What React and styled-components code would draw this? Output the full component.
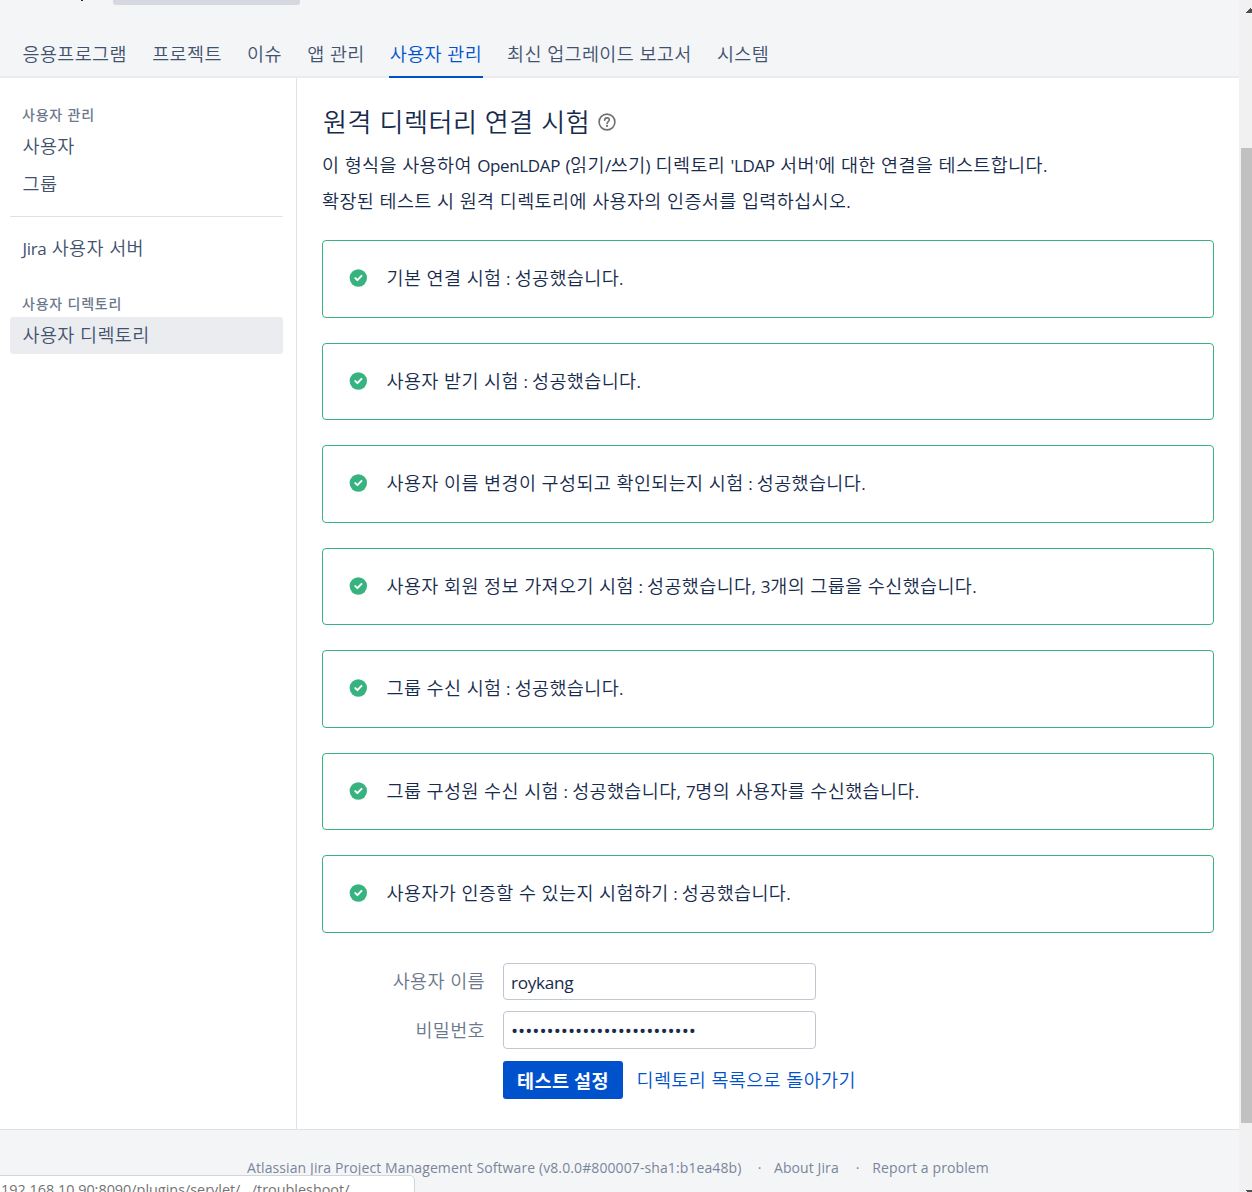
import React from "react";
import styled, { createGlobalStyle } from "styled-components";

const hangul = `"Noto Sans CJK KR", sans-serif`;
const latin = `"Open Sans", "Noto Sans CJK KR", sans-serif`;

const GlobalStyle = createGlobalStyle`
  * { box-sizing: border-box; }
  html, body { margin: 0; height: 100%; overflow: hidden; }
  body {
    background: #fff;
    color: #172b4d;
    font-family: ${hangul};
    font-size: 18.5px;
    font-weight: 350;
    letter-spacing: 0.38px;
    word-spacing: 0.8px;
  }
`;

const Window = styled.div`
  display: flex;
  height: 1192px;
  overflow: hidden;
`;

const Page = styled.div`
  width: 1239px;
  height: 1192px;
  display: flex;
  flex-direction: column;
`;

const Header = styled.header`
  height: 78px;
  background: #f4f5f7;
  box-shadow: inset 0 -2px 0 #ebecf0;
  display: flex;
  flex-direction: column;
  flex-shrink: 0;
`;

const TitleRow = styled.div`
  height: 31px;
  padding-left: 81px;
  display: flex;
  align-items: flex-start;
  gap: 30px;
`;

const TitleEdge = styled.span`
  width: 2px;
  height: 1px;
  background: #172b4d;
`;

const SearchEdge = styled.span`
  width: 187px;
  height: 5px;
  border-radius: 0 0 3px 3px;
  background: #d5d8e0;
`;

const Tabs = styled.nav`
  display: flex;
  gap: 25.3px;
  padding-left: 22.5px;
  height: 47px;
`;

const Tab = styled.a`
  height: 47px;
  line-height: 45px;
  white-space: nowrap;
  color: ${(p) => (p.$active ? "#0052cc" : "#42526e")};
  border-bottom: 2px solid ${(p) => (p.$active ? "#0052cc" : "transparent")};
  padding: 0 ${(p) => (p.$active ? "0.6px" : "0")};
  margin: 0 ${(p) => (p.$active ? "-0.9px" : "0")};
`;

const Body = styled.div`
  display: flex;
  height: 1051px;
  flex-shrink: 0;
`;

const Sidebar = styled.aside`
  width: 297px;
  border-right: 1px solid #dfe1e5;
  padding: 26px 13px 0 10px;
`;

const GroupTitle = styled.h3`
  margin: 0;
  padding-left: 12px;
  height: 24px;
  line-height: 21px;
  font-size: 14px;
  font-weight: 500;
  letter-spacing: 0.75px;
  color: #6b778c;
`;

const SideLink = styled.a`
  display: block;
  height: 37.5px;
  line-height: 34px;
  padding-left: 12.5px;
  border-radius: 3px;
  color: #42526e;
  background: ${(p) => (p.$selected ? "#ebecf0" : "transparent")};
`;

const Rule = styled.hr`
  border: 0;
  border-top: 1px solid #dfe1e5;
  margin: 13px 0;
`;

const Group = styled.section`
  margin-top: ${(p) => p.$top || 0}px;
`;

const Main = styled.main`
  flex: 1;
  padding: 24px 25px 0 25px;
`;

const Heading = styled.h1`
  margin: 0;
  padding-left: 1px;
  height: 40px;
  display: flex;
  align-items: center;
  gap: 8px;
  font-size: 26px;
  font-weight: 350;
  letter-spacing: 0.58px;
  word-spacing: 1px;
  line-height: 38px;
`;

const HeadingText = styled.span`
  height: 40px;
`;

const Intro = styled.p`
  margin: 0;
  height: 36px;
  line-height: 45px;
  white-space: nowrap;
`;

const Latin = styled.span`
  font-family: ${latin};
  font-size: 17px;
  font-weight: 400;
  letter-spacing: -0.35px;
  line-height: 1;
  margin: 0 ${(p) => (p.$tight ? "-0.8px" : "0")};
`;

const Results = styled.ul`
  list-style: none;
  margin: 0;
  padding: 26.25px 0 0;
  display: flex;
  flex-direction: column;
  gap: 25px;
`;

const Result = styled.li`
  height: 77.5px;
  border: 1px solid #36b37e;
  border-radius: 4px;
  padding: 0 0 4px 26px;
  display: flex;
  align-items: center;
  gap: 19.5px;
  svg {
    flex-shrink: 0;
    margin-top: 2px;
  }
`;

const Form = styled.form`
  margin-top: 30px;
  display: grid;
  grid-template-columns: 163px auto;
  column-gap: 18px;
  row-gap: 11px;
  justify-content: start;
`;

const Label = styled.label`
  line-height: ${(p) => p.$line}px;
  text-align: right;
  color: #6b778c;
`;

const Input = styled.input`
  width: 313px;
  height: ${(p) => p.$height}px;
  border: 1px solid #c1c7d0;
  border-radius: 4px;
  padding: 2px 7px 0;
  color: #172b4d;
  background: #fff;
  font-family: ${latin};
  font-size: ${(p) => p.$size}px;
  letter-spacing: ${(p) => p.$spacing}px;
  outline: none;
`;

const Actions = styled.div`
  grid-column: 2;
  display: flex;
  align-items: center;
  gap: 13.5px;
  margin-top: 1px;
`;

const Submit = styled.button`
  width: 120px;
  height: 38px;
  border: 0;
  border-radius: 3px;
  padding: 0;
  background: #0052cc;
  color: #fff;
  font-family: ${hangul};
  font-size: 18.5px;
  font-weight: 700;
  letter-spacing: 0.45px;
`;

const BackLink = styled.a`
  color: #0052cc;
  padding-bottom: 2px;
`;

const Footer = styled.footer`
  flex: 1;
  border-top: 1px solid #dfe1e5;
  background: #f4f5f7;
  padding: 27px 0 0 247px;
  display: flex;
  align-items: flex-start;
  white-space: nowrap;
  font-family: ${latin};
  font-size: 14px;
  font-weight: 400;
  line-height: 22px;
  letter-spacing: 0.1px;
  word-spacing: 0;
  color: #7a869a;
`;

const Dot = styled.span`
  width: ${(p) => p.$width}px;
  padding-left: 4px;
  text-align: center;
`;

const StatusBubble = styled.div`
  position: fixed;
  left: -1px;
  top: 1175px;
  width: 416px;
  height: 30px;
  border: 1px solid #d3d5d9;
  border-radius: 0 5px 0 0;
  background: #fff;
  padding-left: 1px;
  font-family: ${latin};
  font-size: 14.4px;
  line-height: 27px;
  font-weight: 400;
  letter-spacing: 0;
  word-spacing: 0;
  color: #737373;
  white-space: nowrap;
`;

const Scrollbar = styled.div`
  width: 13px;
  height: 1192px;
  background: #f1f1f1;
  padding: 8px 0 0 2px;
  display: flex;
  flex-direction: column;
`;

const Arrow = styled.svg`
  display: block;
  margin-left: 4px;
  flex-shrink: 0;
`;

const Thumb = styled.div`
  height: 975px;
  margin: 135px 0 67px;
  background: #c1c1c1;
  flex-shrink: 0;
`;

function CheckIcon() {
  return (
    <svg width="18" height="18" viewBox="0 0 18 18">
      <circle cx="9.3" cy="9" r="8.7" fill="#36b37e" />
      <path d="M6.3 9.1 8.4 11.1 12.5 6.9" fill="none" stroke="#fff" strokeWidth="2" strokeLinecap="round" strokeLinejoin="round" />
    </svg>
  );
}

function HelpIcon() {
  return (
    <svg width="18" height="18" viewBox="0 0 18 18" fill="none" stroke="#707070">
      <circle cx="9" cy="9" r="7.9" strokeWidth="1.6" />
      <path d="M6.7 7.2C6.7 5.8 7.6 4.9 9 4.9s2.3.9 2.3 2.1c0 1.5-2.2 1.6-2.2 3.4" strokeWidth="1.6" strokeLinecap="round" />
      <circle cx="9" cy="12.9" r="1.1" fill="#707070" stroke="none" />
    </svg>
  );
}

/* Sets runs of Latin letters, digits and punctuation in the Latin face. */
function Mixed({ children }) {
  return children
    .split(/([A-Za-z0-9()/:'.,]+)/)
    .map((part, i) => (i % 2 ? <Latin key={i} $tight={part === ":"}>{part}</Latin> : part));
}

const tabs = ["응용프로그램", "프로젝트", "이슈", "앱 관리", "사용자 관리", "최신 업그레이드 보고서", "시스템"];

const results = [
  "기본 연결 시험 : 성공했습니다.",
  "사용자 받기 시험 : 성공했습니다.",
  "사용자 이름 변경이 구성되고 확인되는지 시험 : 성공했습니다.",
  "사용자 회원 정보 가져오기 시험 : 성공했습니다, 3개의 그룹을 수신했습니다.",
  "그룹 수신 시험 : 성공했습니다.",
  "그룹 구성원 수신 시험 : 성공했습니다, 7명의 사용자를 수신했습니다.",
  "사용자가 인증할 수 있는지 시험하기 : 성공했습니다.",
];

export default function App() {
  return (
    <>
      <GlobalStyle />
      <Window>
        <Page>
          <Header>
            <TitleRow>
              <TitleEdge />
              <SearchEdge />
            </TitleRow>
            <Tabs>
              {tabs.map((t) => (
                <Tab key={t} $active={t === "사용자 관리"}>{t}</Tab>
              ))}
            </Tabs>
          </Header>
          <Body>
            <Sidebar>
              <GroupTitle>사용자 관리</GroupTitle>
              <SideLink>사용자</SideLink>
              <SideLink>그룹</SideLink>
              <Rule />
              <SideLink><Mixed>Jira 사용자 서버</Mixed></SideLink>
              <Group $top={25}>
                <GroupTitle>사용자 디렉토리</GroupTitle>
                <SideLink $selected>사용자 디렉토리</SideLink>
              </Group>
            </Sidebar>
            <Main>
              <Heading>
                <HeadingText>원격 디렉터리 연결 시험</HeadingText>
                <HelpIcon />
              </Heading>
              <Intro><Mixed>이 형식을 사용하여 OpenLDAP (읽기/쓰기) 디렉토리 'LDAP 서버'에 대한 연결을 테스트합니다.</Mixed></Intro>
              <Intro><Mixed>확장된 테스트 시 원격 디렉토리에 사용자의 인증서를 입력하십시오.</Mixed></Intro>
              <Results>
                {results.map((r) => (
                  <Result key={r}>
                    <CheckIcon />
                    <span><Mixed>{r}</Mixed></span>
                  </Result>
                ))}
              </Results>
              <Form>
                <Label htmlFor="username" $line={34}>사용자 이름</Label>
                <Input id="username" $height={37} $size={17.2} $spacing={-0.3} defaultValue="roykang" />
                <Label htmlFor="password" $line={36}>비밀번호</Label>
                <Input id="password" type="password" $height={38} $size={19} $spacing={-0.03} defaultValue="abcdefghijklmnopqrstuvwxyz" />
                <Actions>
                  <Submit type="button">테스트 설정</Submit>
                  <BackLink>디렉토리 목록으로 돌아가기</BackLink>
                </Actions>
              </Form>
            </Main>
          </Body>
          <Footer>
            <span>Atlassian Jira Project Management Software (v8.0.0#800007-sha1:b1ea48b)</span>
            <Dot $width={32.5}>·</Dot>
            <span>About Jira</span>
            <Dot $width={33.5}>·</Dot>
            <span>Report a problem</span>
          </Footer>
        </Page>
        <Scrollbar>
          <Arrow width="7" height="5" viewBox="0 0 7 5" shapeRendering="crispEdges">
            <path d="M0 5 5 0 10 5Z" fill="#505050" />
          </Arrow>
          <Thumb />
          <Arrow width="7" height="5" viewBox="0 0 7 5" shapeRendering="crispEdges">
            <path d="M0 0 5 5 10 0Z" fill="#505050" />
          </Arrow>
        </Scrollbar>
      </Window>
      <StatusBubble>192.168.10.90:8090/plugins/servlet/.../troubleshoot/</StatusBubble>
    </>
  );
}
